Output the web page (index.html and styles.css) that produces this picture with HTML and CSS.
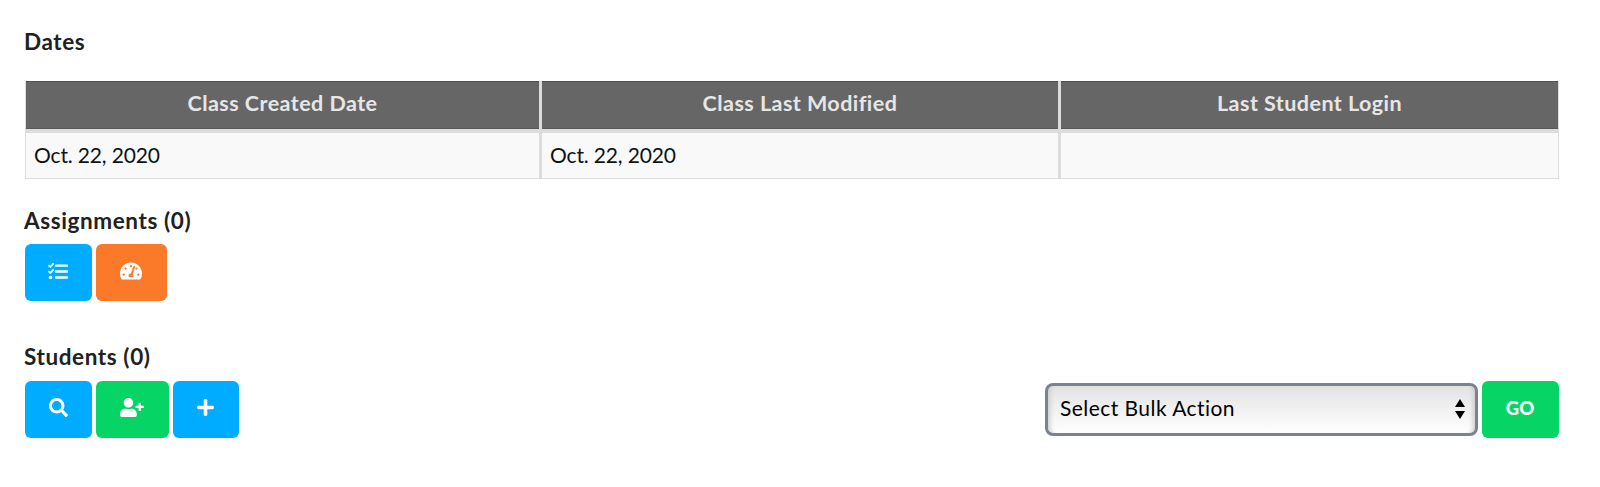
FILE: index.html
```
<!DOCTYPE html>
<html lang="en">
<head>
    <meta charset="UTF-8">
    <meta name="viewport" content="width=device-width, initial-scale=1.0">
    <title>Class Details</title>
    <link rel="stylesheet" href="styles.css">
</head>
<body>
    <section class="dates">
        <h2>Dates</h2>
        <table class="dates-table">
            <thead>
                <tr>
                    <th class="col-created">Class Created Date</th>
                    <th class="col-modified">Class Last Modified</th>
                    <th>Last Student Login</th>
                </tr>
            </thead>
            <tbody>
                <tr>
                    <td>Oct. 22, 2020</td>
                    <td>Oct. 22, 2020</td>
                    <td></td>
                </tr>
            </tbody>
        </table>
    </section>

    <section class="assignments">
        <h2>Assignments (0)</h2>
        <div class="toolbar">
            <button type="button" class="btn btn-blue w-list" aria-label="Assignments">
                <svg class="icon" width="20" height="19" viewBox="0 0 512 512" preserveAspectRatio="none">
                    <g fill="none" stroke="currentColor" stroke-width="48" stroke-linecap="round" stroke-linejoin="round">
                        <path d="M24 98l36 36 70-82"/>
                        <path d="M24 258l36 36 70-82"/>
                    </g>
                    <circle cx="64" cy="416" r="47"/>
                    <rect x="176" y="64" width="336" height="64" rx="16"/>
                    <rect x="176" y="224" width="336" height="64" rx="16"/>
                    <rect x="176" y="384" width="336" height="64" rx="16"/>
                </svg>
            </button>
            <button type="button" class="btn btn-orange w-gauge" aria-label="Dashboard">
                <svg class="icon" width="22" height="20" viewBox="0 0 576 512">
                    <path d="M288 32C128.94 32 0 160.94 0 320c0 52.8 14.25 102.26 39.06 144.8 5.61 9.62 16.3 15.2 27.44 15.2h443c11.14 0 21.83-5.58 27.44-15.2C561.75 422.26 576 372.8 576 320c0-159.06-128.94-288-288-288z"/>
                    <g class="gauge-marks">
                        <circle cx="288" cy="128" r="30"/>
                        <circle cx="144" cy="192" r="30"/>
                        <circle cx="96" cy="352" r="30"/>
                        <circle cx="432" cy="192" r="30"/>
                        <circle cx="480" cy="352" r="30"/>
                        <path d="M349 137c4-13 17-20 30-16s20 17 16 30l-61 184c11 11 18 29 18 49 0 12-3 23-9 32H233c-6-9-9-20-9-32 0-34 27-62 61-64z"/>
                    </g>
                </svg>
            </button>
        </div>
    </section>

    <section class="students">
        <h2>Students (0)</h2>
        <div class="toolbar">
            <button type="button" class="btn btn-blue w-search" aria-label="Search">
                <svg class="icon" width="19" height="19" viewBox="0 0 512 512">
                    <path d="M505 442.7L405.3 343c-4.5-4.5-10.6-7-17-7H372c27.6-35.3 44-79.7 44-128C416 93.1 322.9 0 208 0S0 93.1 0 208s93.1 208 208 208c48.3 0 92.7-16.4 128-44v16.3c0 6.4 2.5 12.5 7 17l99.7 99.7c9.4 9.4 24.6 9.4 33.9 0l28.3-28.3c9.4-9.4 9.4-24.6.1-34zM208 336c-70.7 0-128-57.2-128-128 0-70.7 57.2-128 128-128 70.7 0 128 57.2 128 128 0 70.7-57.2 128-128 128z"/>
                </svg>
            </button>
            <button type="button" class="btn btn-green w-user" aria-label="Add student">
                <svg class="icon" width="24" height="19" viewBox="0 0 640 512">
                    <path d="M624 208h-64v-64c0-8.8-7.2-16-16-16h-32c-8.8 0-16 7.2-16 16v64h-64c-8.8 0-16 7.2-16 16v32c0 8.8 7.2 16 16 16h64v64c0 8.8 7.2 16 16 16h32c8.8 0 16-7.2 16-16v-64h64c8.8 0 16-7.2 16-16v-32c0-8.8-7.2-16-16-16zm-400 48c70.7 0 128-57.3 128-128S294.7 0 224 0 96 57.3 96 128s57.3 128 128 128zm89.6 32h-16.7c-22.2 10.2-46.9 16-72.9 16s-50.6-5.8-72.9-16h-16.7C60.2 288 0 348.2 0 422.4V464c0 26.5 21.5 48 48 48h352c26.5 0 48-21.5 48-48v-41.6c0-74.2-60.2-134.4-134.4-134.4z"/>
                </svg>
            </button>
            <button type="button" class="btn btn-blue w-plus" aria-label="Add">
                <svg class="icon" width="17" height="19" viewBox="0 0 448 512">
                    <path d="M416 208H272V64c0-17.67-14.33-32-32-32h-32c-17.67 0-32 14.33-32 32v144H32c-17.67 0-32 14.33-32 32v32c0 17.67 14.33 32 32 32h144v144c0 17.67 14.33 32 32 32h32c17.67 0 32-14.33 32-32V304h144c17.67 0 32-14.33 32-32v-32c0-17.67-14.33-32-32-32z"/>
                </svg>
            </button>
            <form class="bulk">
                <div class="select" role="combobox" aria-label="Bulk action" tabindex="0">
                    <span>Select Bulk Action</span>
                    <svg class="arrows" width="10" height="20" viewBox="0 0 10 20">
                        <path d="M5 0l5 8H0zM0 12h10L5 20z"/>
                    </svg>
                </div>
                <button type="button" class="btn btn-green w-go">GO</button>
            </form>
        </div>
    </section>
</body>
</html>
```
FILE: styles.css
```
body {
    margin: 0;
    padding: 28px 41px 0 25px;
    font-family: Lato, "Open Sans", sans-serif;
    font-size: 21px;
    font-variant-ligatures: none;
    color: #111;
    background-color: #fff;
}
h2 {
    margin: 0;
    font-size: 22.5px;
    line-height: 27px;
    font-weight: 700;
    letter-spacing: 0.6px;
    text-indent: -1px;
    color: #212121;
}
.dates-table {
    width: 1534px;
    margin-top: 26px;
    border-collapse: separate;
    border-spacing: 0;
    table-layout: fixed;
    border-left: 1px solid #dcdcdc;
    border-right: 1px solid #dcdcdc;
}
.dates-table th {
    height: 47px;
    padding: 0 0 4px;
    box-sizing: border-box;
    background-color: #666;
    background-clip: padding-box;
    border-bottom: 4px solid #dcdcdc;
    box-shadow: inset 0 1px 0 #505050, inset 0 -1px 0 #585858;
    color: #e6e6e6;
    font-size: 21.5px;
    font-weight: 700;
    line-height: 26px;
    letter-spacing: 0.45px;
    text-align: center;
}
.dates-table thead tr {
    height: 52px;
}
.dates-table td {
    height: 46px;
    padding: 0 0 2px 8px;
    box-sizing: border-box;
    background-color: #f9f9f9;
    border-bottom: 1px solid #dcdcdc;
    line-height: 26px;
    letter-spacing: -0.15px;
}
.dates-table th + th,
.dates-table td + td {
    border-left: 3px solid #dcdcdc;
}
.col-created {
    width: 513px;
}
.col-modified {
    width: 519px;
}
.assignments {
    margin-top: 28px;
}
.students {
    margin-top: 42px;
}
.students .toolbar {
    margin-top: 11px;
}
.toolbar {
    display: flex;
    gap: 4px;
    margin-top: 10px;
}
.btn {
    display: flex;
    align-items: center;
    justify-content: center;
    height: 57px;
    padding: 0 1px 3px 0;
    border: 0;
    border-radius: 6px;
    color: #fff;
    font-family: inherit;
    font-size: 18.5px;
    font-weight: 900;
    cursor: pointer;
}
.students .btn {
    padding-bottom: 4px;
}
.btn-blue {
    background-color: #00acff;
}
.btn-orange {
    background-color: #fb7a29;
}
.btn-green {
    background-color: #06d566;
}
.icon {
    display: block;
    fill: currentColor;
}
.gauge-marks {
    fill: #fb7a29;
}
.w-list,
.w-search {
    width: 67px;
}
.w-gauge {
    width: 71px;
}
.w-user {
    width: 73px;
}
.w-plus {
    width: 66px;
}
.w-go {
    width: 77px;
}
.bulk {
    display: flex;
    align-items: center;
    gap: 4px;
    margin-left: auto;
}
.select {
    display: flex;
    align-items: center;
    justify-content: space-between;
    width: 433px;
    height: 53px;
    margin-bottom: 1px;
    padding: 0 10px 2px 12px;
    box-sizing: border-box;
    border: 3px solid #7b8292;
    border-radius: 8px;
    background: linear-gradient(#e3e3e3, #fff);
    box-shadow: inset 6px 0 5px -4px #ccc, inset -6px 0 5px -4px #ccc;
    color: #000;
    line-height: 26px;
    letter-spacing: 0.45px;
}
.arrows {
    margin-top: 2px;
}
```
